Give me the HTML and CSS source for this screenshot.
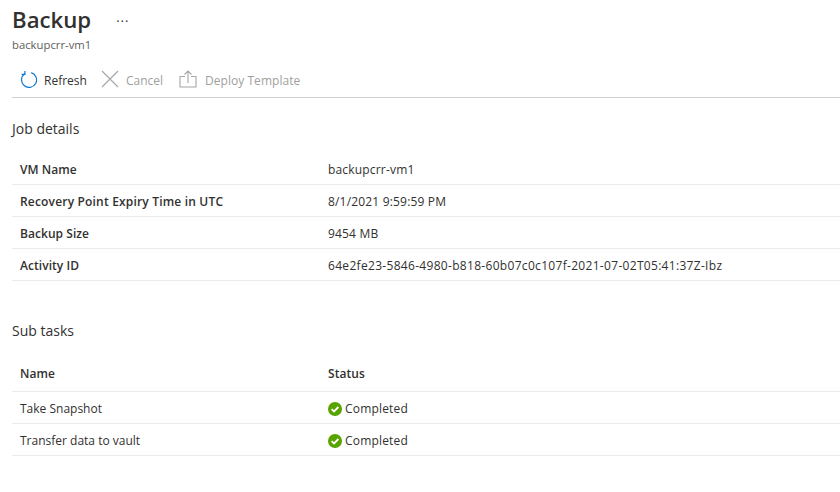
FILE: index.html
```html
<!DOCTYPE html>
<html lang="en">
<head>
<meta charset="utf-8">
<title>Backup</title>
<link rel="stylesheet" href="styles.css">
</head>
<body>
<div class="page">
  <header class="head">
    <div class="title-row"><h1 class="title">Backup</h1><span class="more">···</span></div>
    <div class="subtitle">backupcrr-vm1</div>
  </header>
  <div class="toolbar">
    <div class="tool">
      <svg class="icon" width="18" height="18" viewBox="0 0 18 18" fill="none" stroke="#0f78d4" stroke-width="1.2"><path d="M5.7 3.800A7.500 7.500 0 1 0 12.200 2.700"/><path d="M5.900 1V4.300H2.600"/></svg>
      <span class="label">Refresh</span>
    </div>
    <div class="tool off">
      <svg class="icon" width="18" height="18" viewBox="0 0 18 18" fill="none" stroke="#a6a6a6" stroke-width="1.1"><path d="M1 1L17 17M17 1L1 17"/></svg>
      <span class="label">Cancel</span>
    </div>
    <div class="tool off deploy">
      <svg class="icon" width="18" height="18" viewBox="0 0 18 18" fill="none" stroke="#a6a6a6" stroke-width="1.1"><path d="M6 6.500H1V17H17V6.500H12"/><path d="M9 13V1M5.500 4.500L9 1L12.500 4.500"/></svg>
      <span class="label">Deploy Template</span>
    </div>
  </div>
  <section class="job">
    <h2 class="section">Job details</h2>
    <div class="row"><div class="key">VM Name</div><div class="val">backupcrr-vm1</div></div>
    <div class="row"><div class="key long">Recovery Point Expiry Time in UTC</div><div class="val">8/1/2021 9:59:59 PM</div></div>
    <div class="row"><div class="key">Backup Size</div><div class="val">9454 MB</div></div>
    <div class="row"><div class="key">Activity ID</div><div class="val id">64e2fe23-5846-4980-b818-60b07c0c107f-2021-07-02T05:41:37Z-Ibz</div></div>
  </section>
  <section class="tasks">
    <h2 class="section">Sub tasks</h2>
    <div class="row header"><div class="key">Name</div><div class="key">Status</div></div>
    <div class="row"><div>Take Snapshot</div><div class="status"><svg width="14" height="14" viewBox="0 0 14 14"><circle cx="7" cy="7" r="7" fill="#57a300"/><path d="M3.600 7.200L6 9.500L10.400 5" fill="none" stroke="#fff" stroke-width="1.800"/></svg><span class="val">Completed</span></div></div>
    <div class="row"><div>Transfer data to vault</div><div class="status"><svg width="14" height="14" viewBox="0 0 14 14"><circle cx="7" cy="7" r="7" fill="#57a300"/><path d="M3.600 7.200L6 9.500L10.400 5" fill="none" stroke="#fff" stroke-width="1.800"/></svg><span class="val">Completed</span></div></div>
  </section>
</div>
</body>
</html>
```
FILE: styles.css
```css
* { box-sizing: border-box; }
html, body { margin: 0; padding: 0; background: #fff; }
body { width: 840px; height: 492px; overflow: hidden; font-family: "Open Sans", "Noto Sans", sans-serif; font-size: 12px; color: #323130; }
.page { padding: 0 0 0 12px; }
.head { height: 60px; padding-top: 4px; }
.title-row { display: flex; align-items: center; height: 32px; }
.title { margin: 0; font-size: 22.2px; font-weight: 600; line-height: 32px; color: #323130; }
.more { margin-left: 25px; font-size: 13px; line-height: 34px; height: 32px; letter-spacing: 1px; }
.subtitle { margin-top: 1px; font-size: 11.3px; line-height: 16px; color: #605e5c; }
.toolbar { display: flex; align-items: center; height: 38px; border-bottom: 1px solid #d2d0ce; padding-left: 7px; gap: 14px; }
.tool { display: flex; align-items: center; gap: 7px; color: #323130; }
.tool.off { color: #a19f9d; }
.tool.deploy { margin-left: 2px; gap: 8px; }
.label { padding-top: 3px; }
.deploy .label { letter-spacing: .04px; }
.section { margin: 0; font-size: 14px; font-weight: 400; line-height: 20px; height: 20px; }
.job { padding-top: 21px; }
.job .section { margin-bottom: 14px; }
.tasks { padding-top: 40px; }
.tasks .section { margin-bottom: 19px; }
.row { display: grid; grid-template-columns: 308px 1fr; align-items: center; height: 32px; padding-left: 8px; padding-top: 2px; border-bottom: 1px solid #edebe9; }
.row.header { padding-top: 0; padding-bottom: 4px; }
.key { font-weight: 600; letter-spacing: .05px; }
.key.long { letter-spacing: .18px; }
.val { letter-spacing: .18px; }
.val.id { letter-spacing: .31px; }
.status { display: flex; align-items: center; gap: 3px; }
```
